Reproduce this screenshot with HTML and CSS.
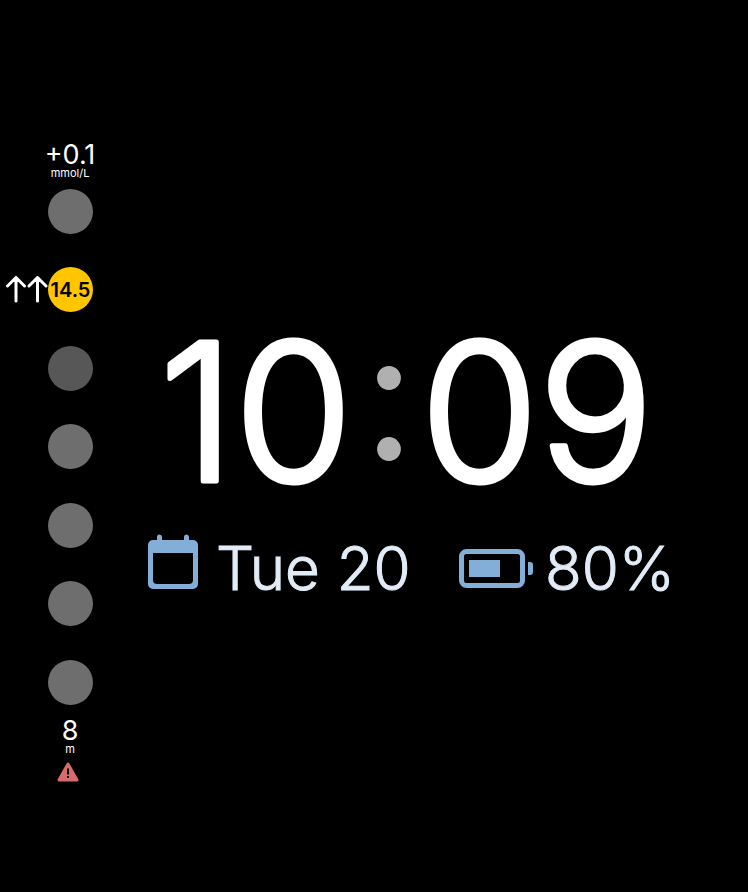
FILE: index.html
```html
<!DOCTYPE html>
<html lang="en">
<head>
<meta charset="utf-8">
<meta name="viewport" content="width=device-width, initial-scale=1">
<title>Watch face</title>
<link rel="stylesheet" href="styles.css">
</head>
<body>
<main class="face">
  <aside class="rail">
    <div class="reading">
      <span class="reading-value">+0.1</span>
      <span class="reading-unit">mmol/L</span>
    </div>
    <ul class="dots">
      <li class="dot-row"><span class="dot"></span></li>
      <li class="dot-row">
        <svg class="trend" viewBox="0 0 42 28" role="img" aria-label="Rising fast">
          <path d="M10 25V2M1.500 10L10 1.500L18.500 10M31.500 25V2M23 10L31.500 1.500L40 10"/>
        </svg>
        <span class="dot dot-active">14.5</span>
      </li>
      <li class="dot-row"><span class="dot dot-dim"></span></li>
      <li class="dot-row"><span class="dot"></span></li>
      <li class="dot-row"><span class="dot"></span></li>
      <li class="dot-row"><span class="dot"></span></li>
      <li class="dot-row"><span class="dot"></span></li>
    </ul>
    <div class="reading reading-age">
      <span class="reading-value">8</span>
      <span class="reading-unit">m</span>
      <svg class="warning" viewBox="0 0 22 20" aria-hidden="true">
        <path d="M11 2 L20 18 H2 Z" fill="#d66b6b" stroke="#d66b6b" stroke-width="3" stroke-linejoin="round"/>
        <path d="M11 6.500v6" stroke="#000" stroke-width="2"/>
        <path d="M11 14v2" stroke="#000" stroke-width="2"/>
      </svg>
    </div>
  </aside>
  <section class="main">
    <svg class="clock" viewBox="0 0 523 160">
      <text class="digits" x="108" y="155">10</text>
      <text class="colon" x="241" y="134">:</text>
      <text class="digits" x="389" y="155">09</text>
    </svg>
    <div class="info">
      <div class="info-item">
        <svg class="calendar" viewBox="0 0 50 56" aria-hidden="true">
          <path fill="#82aed8" fill-rule="evenodd" d="M9 6V3a2.500 2.500 0 0 1 5 0v3h22V3a2.500 2.500 0 0 1 5 0v3h4a5 5 0 0 1 5 5v39a5 5 0 0 1-5 5H5a5 5 0 0 1-5-5V11a5 5 0 0 1 5-5zM5 19v27a4 4 0 0 0 4 4h32a4 4 0 0 0 4-4V19z"/>
        </svg>
        <span>Tue 20</span>
      </div>
      <div class="info-item">
        <svg class="battery" viewBox="0 0 74 39" aria-hidden="true">
          <rect x="2.500" y="2.500" width="61" height="34" rx="5" fill="none" stroke="#82aed8" stroke-width="5"/>
          <rect x="10" y="11" width="31" height="17" fill="#82aed8"/>
          <path d="M69 13h2a3 3 0 0 1 3 3v7a3 3 0 0 1-3 3h-2z" fill="#82aed8"/>
        </svg>
        <span>80%</span>
      </div>
    </div>
  </section>
</main>
</body>
</html>
```
FILE: styles.css
```css
body {
  margin: 0;
  background: #000;
  color: #fff;
  font-family: Inter, "Liberation Sans", sans-serif;
}

.face {
  display: flex;
  min-height: 100vh;
  align-items: center;
}

.rail {
  flex: none;
  width: 93px;
  padding-top: 30px;
}

.reading {
  display: flex;
  flex-direction: column;
  align-items: center;
  width: 46px;
  margin-left: 47px;
}

.reading-value {
  font-size: 27px;
  line-height: 28px;
}

.reading-unit {
  font-size: 11px;
  line-height: 8px;
}

.reading-age {
  margin-top: 12px;
}

.dots {
  display: flex;
  flex-direction: column;
  justify-content: space-between;
  height: 516px;
  margin: 12px 0 0;
  padding: 0;
  list-style: none;
}

.dot-row {
  display: flex;
  justify-content: flex-end;
  align-items: center;
}

.dot {
  display: flex;
  flex: none;
  align-items: center;
  justify-content: center;
  width: 45px;
  height: 45px;
  border-radius: 50%;
  background: #6e6e6e;
}

.dot-dim {
  background: #575757;
}

.dot-active {
  background: #ffc600;
  color: #000;
  font-size: 20px;
  font-weight: 600;
}

.trend {
  width: 42px;
  height: 28px;
  fill: none;
  stroke: #fff;
  stroke-width: 3px;
  stroke-linecap: round;
  stroke-linejoin: round;
}

.warning {
  width: 22px;
  height: 20px;
  margin: 9px 4px 0 0;
}

.main {
  flex: 1;
  padding: 38px 77px 0 55px;
}

.clock {
  display: block;
  width: 100%;
  overflow: visible;
}

.digits {
  fill: #fff;
  stroke: #fff;
  stroke-width: 5px;
  stroke-linejoin: round;
  font-size: 191px;
  font-weight: 300;
  font-optical-sizing: none;
  text-anchor: middle;
}

.colon {
  fill: #b0b0b0;
  font-family: Lato, sans-serif;
  font-size: 190px;
  text-anchor: middle;
}

.info {
  display: flex;
  justify-content: space-between;
  margin: 46px -4px 0 0;
  color: #e2ecf7;
  font-size: 60px;
  font-weight: 300;
  line-height: 72px;
  white-space: nowrap;
  -webkit-text-stroke: 1px #e2ecf7;
}

.info-item {
  display: flex;
  align-items: center;
}

.calendar {
  width: 50px;
  height: 56px;
  margin: 0 18px 12px 0;
}

.battery {
  width: 74px;
  height: 39px;
  margin-right: 12px;
}
```
